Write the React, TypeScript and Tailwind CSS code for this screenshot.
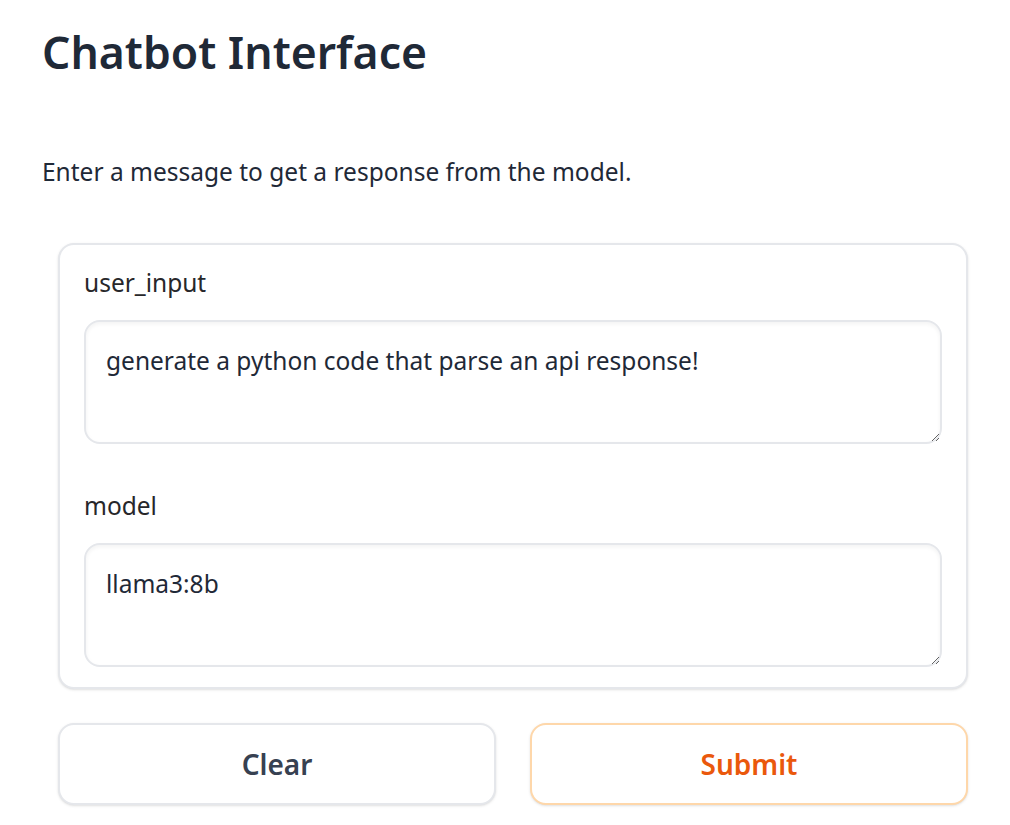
import React from "react";

const font = { fontFamily: '"Noto Sans", "Open Sans", sans-serif' };

function Field({ label, value }: { label: string; value: string }) {
  return (
    <div className="flex flex-col gap-[19px]">
      <label className="text-[24.5px] leading-[36px] text-[#27272a]">{label}</label>
      <textarea
        defaultValue={value}
        rows={2}
        className="h-[124px] w-full rounded-[16px] border-2 border-[#e5e7eb] bg-white px-[20px] py-[21px] text-[24.5px] leading-[36px] text-[#1f2937] shadow-[inset_0_2px_4px_rgba(0,0,0,0.05)] outline-none"
        style={font}
      />
    </div>
  );
}

export default function App() {
  return (
    <div className="min-h-screen bg-white px-[42px] pt-[22px]" style={font}>
      <h1 className="text-[44.5px] font-semibold leading-[60px] text-[#1f2937]">Chatbot Interface</h1>
      <p className="mt-[72px] text-[24.5px] leading-[36px] text-[#1f2937]">
        Enter a message to get a response from the model.
      </p>
      <div className="ml-[16px] mt-[53px] flex flex-col">
        <div className="flex flex-col gap-[44px] rounded-[16px] border-2 border-[#e5e7eb] bg-white px-[24px] pb-[20px] pt-[20px] shadow-sm">
          <Field label="user_input" value="generate a python code that parse an api response!" />
          <Field label="model" value="llama3:8b" />
        </div>
        <div className="mt-[34px] grid grid-cols-2 gap-[34px]">
          <button className="h-[82px] rounded-[16px] border-2 border-[#e5e7eb] bg-white text-[28px] font-semibold text-[#374151] shadow-sm">
            Clear
          </button>
          <button className="h-[82px] rounded-[16px] border-2 border-[#fed7aa] bg-white text-[28px] font-semibold text-[#ea580c] shadow-sm">
            Submit
          </button>
        </div>
      </div>
    </div>
  );
}
